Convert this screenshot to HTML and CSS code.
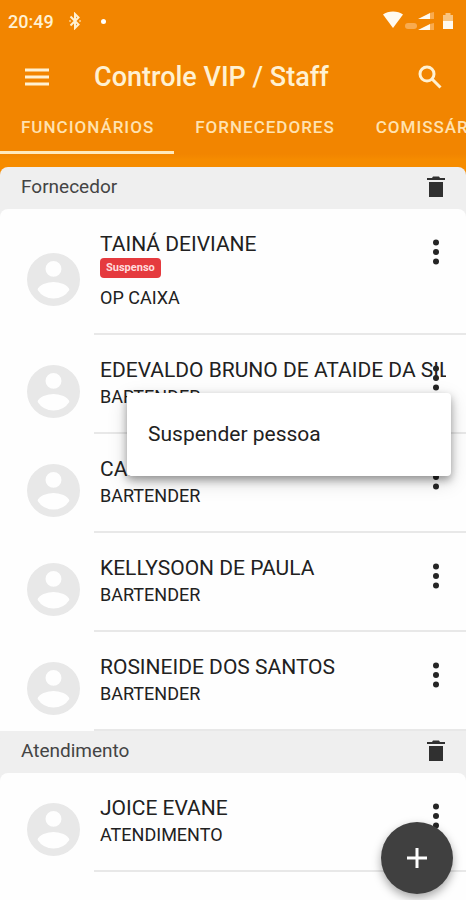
FILE: index.html
```html
<!DOCTYPE html>
<html lang="pt-BR">
<head>
<meta charset="utf-8">
<meta name="viewport" content="width=device-width, initial-scale=1">
<title>Controle VIP / Staff</title>
<link rel="stylesheet" href="styles.css">
</head>
<body>
<svg class="defs" aria-hidden="true">
  <symbol id="person" viewBox="2 2 20 20"><path fill-rule="evenodd" d="M12 2a10 10 0 1 0 0 20 10 10 0 0 0 0-20zm0 3a3 3 0 1 1 0 6 3 3 0 0 1 0-6zm0 14.200a7.200 7.200 0 0 1-6-3.200c.03-2 4-3.100 6-3.100s5.970 1.100 6 3.100a7.200 7.200 0 0 1-6 3.200z"/></symbol>
  <symbol id="more" viewBox="0 0 8 28"><circle cx="4" cy="4.500" r="3"/><circle cx="4" cy="14" r="3"/><circle cx="4" cy="23.500" r="3"/></symbol>
  <symbol id="trash" viewBox="0 0 18 21"><path d="M2 6h14v15H2zM0 2h5l1-1.500h6L13 2h5v2H0z"/></symbol>
</svg>

<header class="app-header">
  <div class="status">
    <span class="clock">20:49</span>
    <svg class="bluetooth" viewBox="0 0 12 18" aria-hidden="true"><path d="M1.500 4.500l8 8L6 16V2l3.500 3.500-8 8"/><path d="M.5 9h1M10.500 9h1"/></svg>
    <span class="dot"></span>
    <svg class="signals" viewBox="0 0 70 20" aria-hidden="true">
      <path d="M0 3.500C5-.5 15-.5 20 3.500L10 17z"/>
      <rect class="faint" x="22" y="12" width="12" height="6" rx="3"/>
      <path class="faint" d="M47 2l4-1v7h-4zM47 13l4-1v7h-4z"/>
      <path d="M35 8l12-6v6zM35 19l12-6v6z"/>
      <path class="dim" d="M60 4h2.500V2h5v2H70v6H60z"/>
      <rect x="60" y="10" width="10" height="8"/>
    </svg>
  </div>
  <div class="toolbar">
    <button class="icon-button" aria-label="Menu"><svg class="menu-icon" viewBox="0 0 24 18"><path d="M0 2h24M0 9h24M0 16h24"/></svg></button>
    <h1>Controle VIP / Staff</h1>
    <button class="icon-button" aria-label="Buscar"><svg class="search-icon" viewBox="0 0 24 24"><circle cx="9" cy="9" r="7"/><path d="M14 14l8.500 8.500"/></svg></button>
  </div>
  <nav class="tabs">
    <a class="tab active" href="#funcionarios">FUNCIONÁRIOS</a>
    <a class="tab" href="#fornecedores">FORNECEDORES</a>
    <a class="tab" href="#comissarios">COMISSÁRIOS</a>
  </nav>
</header>

<main id="funcionarios">
  <section class="group">
    <header class="group-header"><h2>Fornecedor</h2><button class="delete" aria-label="Excluir Fornecedor"><svg><use href="#trash"/></svg></button></header>
    <ul class="people">
      <li class="person">
        <svg class="avatar"><use href="#person"/></svg>
        <div class="info"><h3>TAINÁ DEIVIANE</h3><div class="tags"><span class="tag">Suspenso</span></div><p>OP CAIXA</p></div>
        <button class="more" aria-label="Opções"><svg><use href="#more"/></svg></button>
      </li>
      <li class="person has-menu">
        <svg class="avatar"><use href="#person"/></svg>
        <div class="info"><h3>EDEVALDO BRUNO DE ATAIDE DA SILVA</h3><p>BARTENDER</p></div>
        <button class="more" aria-label="Opções"><svg><use href="#more"/></svg></button>
        <div class="menu"><button class="menu-item">Suspender pessoa</button></div>
      </li>
      <li class="person">
        <svg class="avatar"><use href="#person"/></svg>
        <div class="info"><h3>CA.</h3><p>BARTENDER</p></div>
        <button class="more" aria-label="Opções"><svg><use href="#more"/></svg></button>
      </li>
      <li class="person">
        <svg class="avatar"><use href="#person"/></svg>
        <div class="info"><h3>KELLYSOON DE PAULA</h3><p>BARTENDER</p></div>
        <button class="more" aria-label="Opções"><svg><use href="#more"/></svg></button>
      </li>
      <li class="person">
        <svg class="avatar"><use href="#person"/></svg>
        <div class="info"><h3>ROSINEIDE DOS SANTOS</h3><p>BARTENDER</p></div>
        <button class="more" aria-label="Opções"><svg><use href="#more"/></svg></button>
      </li>
    </ul>
  </section>
  <section class="group">
    <header class="group-header"><h2>Atendimento</h2><button class="delete" aria-label="Excluir Atendimento"><svg><use href="#trash"/></svg></button></header>
    <ul class="people">
      <li class="person">
        <svg class="avatar"><use href="#person"/></svg>
        <div class="info"><h3>JOICE EVANE</h3><p>ATENDIMENTO</p></div>
        <button class="more" aria-label="Opções"><svg><use href="#more"/></svg></button>
      </li>
    </ul>
  </section>
</main>
<button class="fab" aria-label="Adicionar"><svg viewBox="0 0 20 20"><path d="M10 0v20M0 10h20"/></svg></button>
</body>
</html>
```
FILE: styles.css
```css
* { box-sizing: border-box; }
body {
  margin: 0;
  min-height: 100vh;
  background: #fefefe;
  color: #212121;
  font-family: Roboto, "Liberation Sans", sans-serif;
}
h1, h2, h3, p, ul { margin: 0; padding: 0; font-weight: 400; }
ul { list-style: none; }
button { padding: 0; border: 0; background: none; color: inherit; font: inherit; cursor: pointer; }
svg { display: block; }
.defs { position: absolute; width: 0; height: 0; }

.app-header {
  padding-bottom: 13px;
  background: linear-gradient(#f28500 0 154px, #f68c00 160px);
  color: #fff1d2;
}
.status { display: flex; align-items: center; height: 42px; padding: 0 13px 0 8px; }
.clock { font-size: 18px; font-weight: 500; }
.bluetooth { width: 12px; height: 18px; margin-left: 15px; fill: none; stroke: currentColor; stroke-width: 2; }
.dot { width: 5px; height: 5px; margin-left: 20px; border-radius: 50%; background: #fff; }
.signals { width: 70px; height: 20px; margin-left: auto; fill: #fffaf0; }
.signals .faint { fill: #f8ab50; }
.signals .dim { fill: #f9c47f; }
.toolbar { display: flex; align-items: center; height: 70px; padding: 0 16px; }
.toolbar h1 { flex: 1; margin-left: 37px; font-size: 27px; font-weight: 500; white-space: nowrap; }
.icon-button { display: grid; place-items: center; width: 41px; height: 41px; }
.icon-button svg { fill: none; stroke: currentColor; stroke-width: 3; }
.menu-icon { width: 24px; height: 18px; }
.search-icon { width: 24px; height: 24px; }
.tabs { display: flex; height: 42px; overflow: hidden; }
.tab {
  flex: none;
  padding: 4px 20px 0 21px;
  border-bottom: 3px solid transparent;
  color: #ffe2b0;
  font-size: 17px;
  font-weight: 500;
  line-height: 22px;
  letter-spacing: 1px;
  text-decoration: none;
}
.tab.active { border-color: #ffe9bd; }

.group { background: #efefef; }
.group:first-child { background: linear-gradient(#f68c00 0 20px, #efefef 20px); }
.group-header {
  display: flex;
  align-items: center;
  justify-content: space-between;
  height: 42px;
  padding: 0 20px 4px 21px;
  border-radius: 8px 8px 0 0;
  background: #efefef;
}
.group-header h2 { color: #444; font-size: 19px; }
.delete svg { width: 20px; height: 21px; fill: #303030; }
.people { border-radius: 8px 8px 0 0; background: #fefefe; }
.person { position: relative; display: flex; align-items: center; padding: 0 20px 0 27px; }
.person::after { content: ""; position: absolute; right: 0; bottom: 0; left: 94px; height: 2px; background: #e8e8e8; }
.avatar { flex: none; width: 53px; height: 53px; margin: 14px 20px 0 0; fill: #e8e8e8; }
.info { flex: 1; min-width: 0; padding: 21px 0 24px; }
.info h3 { overflow: hidden; font-size: 21px; line-height: 28px; white-space: nowrap; }
.info p { font-size: 18px; line-height: 26px; }
.tags { display: flex; padding-bottom: 7px; }
.tag { padding: 0 6px; border-radius: 4px; background: #e53a3e; color: #ffdcdc; font-size: 11px; font-weight: 700; line-height: 20px; }
.more { position: absolute; top: 22px; right: 10px; display: grid; place-items: center; width: 41px; height: 41px; }
.more svg { width: 8px; height: 28px; fill: #252525; }
.has-menu { z-index: 1; }
.menu {
  position: absolute;
  z-index: 1;
  top: 58px;
  right: 15px;
  left: 127px;
  padding: 14px 0;
  border-radius: 4px;
  background: #fff;
  box-shadow: 0 4px 8px rgba(0, 0, 0, .35), 0 6px 20px rgba(0, 0, 0, .15);
}
.menu-item { display: block; width: 100%; padding: 0 21px; font-size: 21px; line-height: 55px; text-align: left; }
.fab {
  position: fixed;
  z-index: 2;
  right: 13px;
  bottom: 6px;
  display: grid;
  place-items: center;
  width: 72px;
  height: 72px;
  border-radius: 50%;
  background: #404040;
  box-shadow: 0 4px 10px rgba(0, 0, 0, .35);
}
.fab svg { width: 20px; height: 20px; stroke: #fff; stroke-width: 3; }
```
